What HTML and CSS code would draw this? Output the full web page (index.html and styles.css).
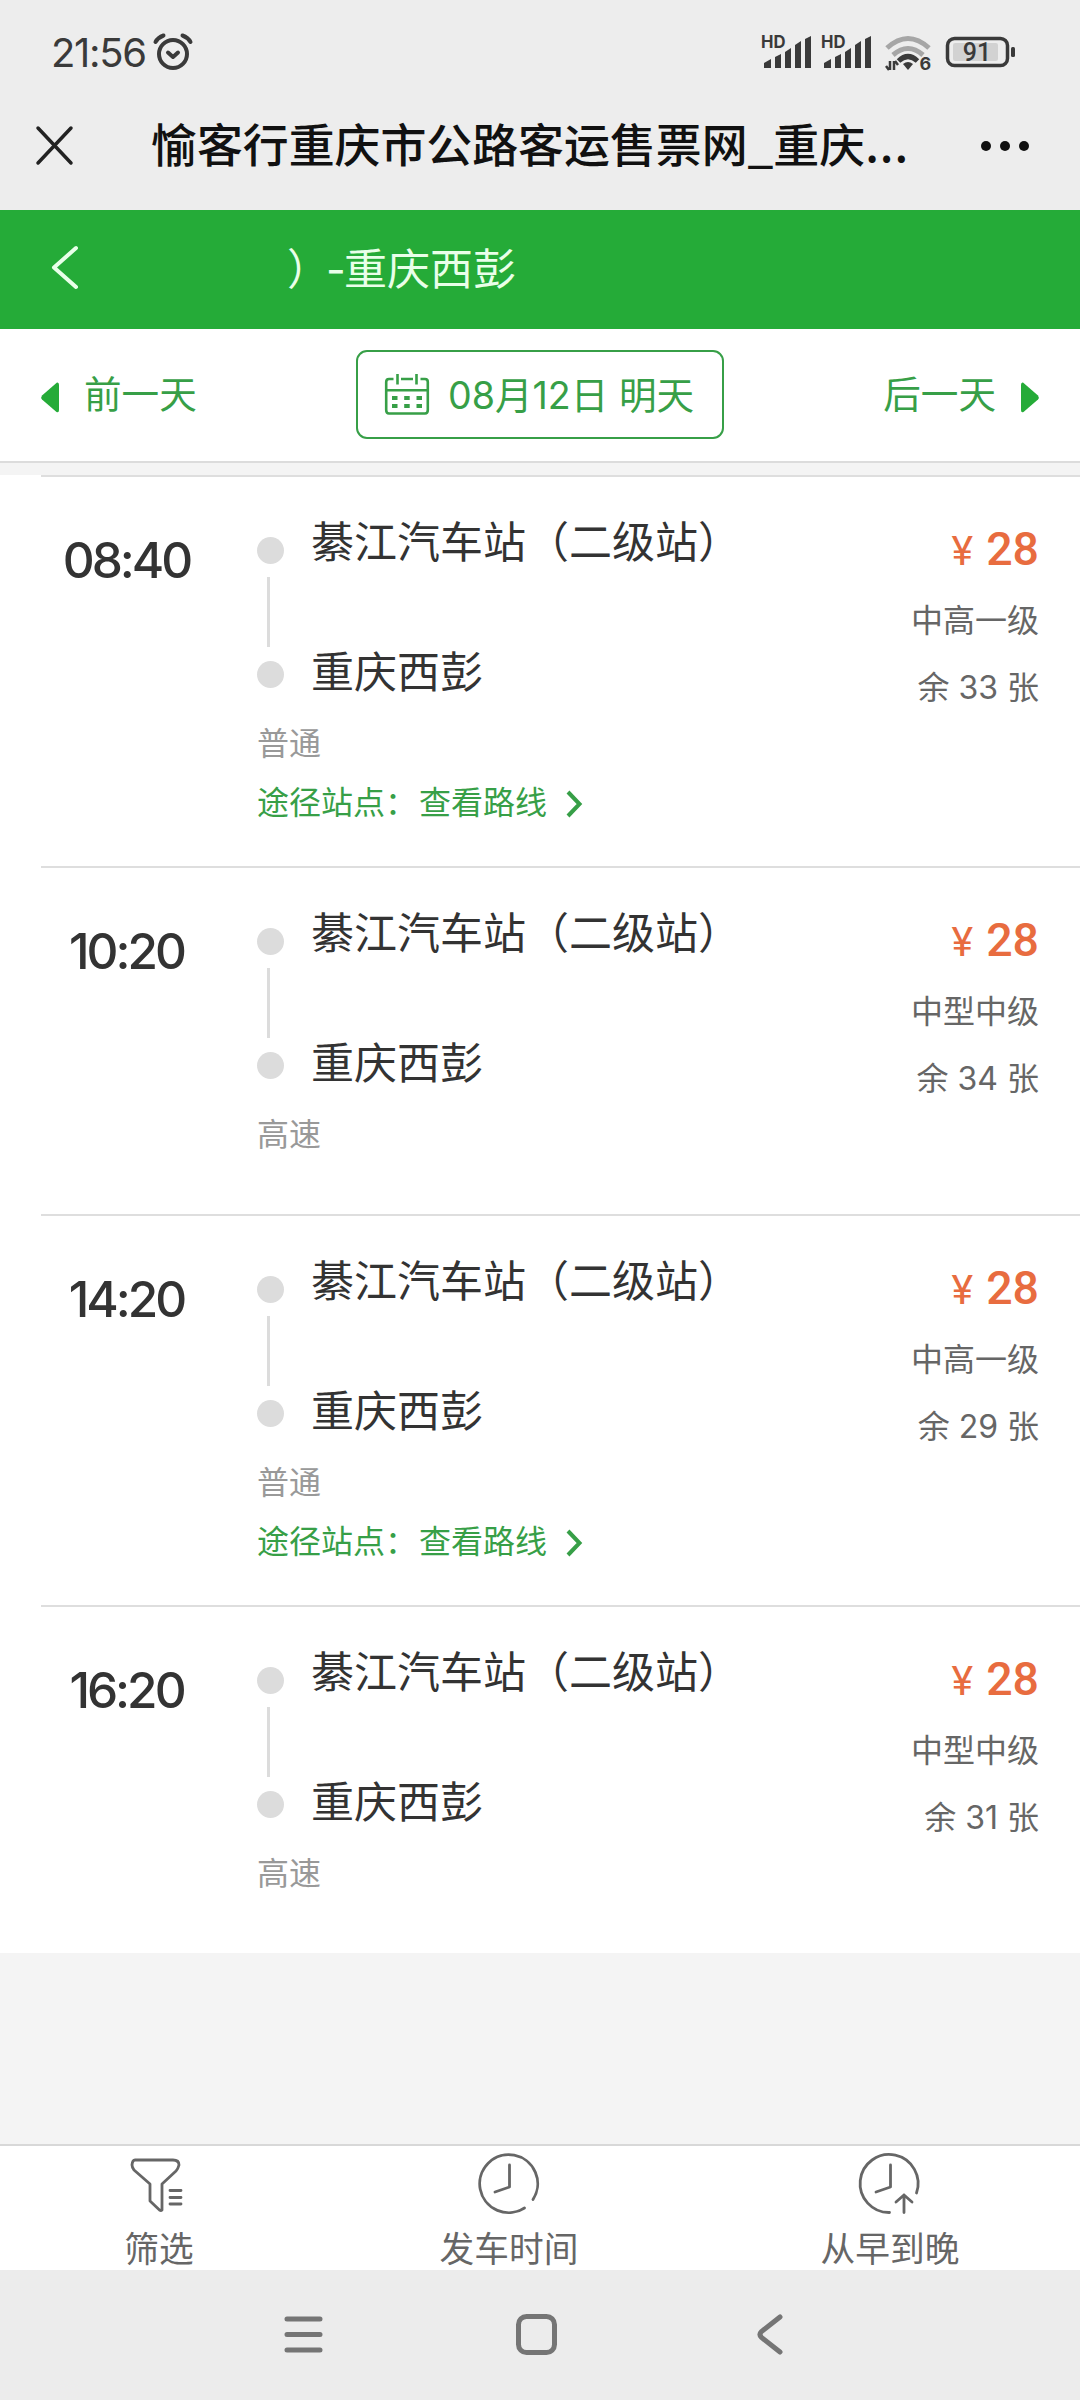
FILE: index.html
```html
<!DOCTYPE html>
<html lang="zh-CN">
<head>
<meta charset="utf-8">
<title>愉客行重庆市公路客运售票网</title>
<link rel="stylesheet" href="styles.css">
</head>
<body>
<div class="status">
  <span class="clock">21:56</span>
  <svg class="alarm" width="40" height="38" viewBox="0 0 40 38" fill="none" stroke="#3a3a3a" stroke-width="4" stroke-linecap="round" stroke-linejoin="round"><circle cx="20" cy="22" r="14"/><path d="M15 20.500l5 4.500 5-4.500"/><path d="M2.500 10Q5 5.500 10.500 3.500M37.500 10Q35 5.500 29.500 3.500"/></svg>
  <div class="status-icons">
    <svg class="signal" width="50" height="34" viewBox="0 0 50 34" fill="#3a3a3a"><text x="-1" y="13" class="hd" textLength="24.500" lengthAdjust="spacingAndGlyphs">HD</text><path d="M2 33v-5l7-4v9zM13 33V22l6-3v14zM23 33V17l6-4v20zM33 33V10l6-4v27zM43 33V4l6-3v32z"/></svg>
    <svg class="signal" width="50" height="34" viewBox="0 0 50 34" fill="#3a3a3a"><text x="-1" y="13" class="hd" textLength="24.500" lengthAdjust="spacingAndGlyphs">HD</text><path d="M2 33v-5l7-4v9zM13 33V22l6-3v14zM23 33V17l6-4v20zM33 33V10l6-4v27zM43 33V4l6-3v32z"/></svg>
    <svg class="wifi" width="48" height="38" viewBox="0 0 48 38" fill="none" stroke-width="5"><g stroke="#a6a6a6"><path d="M2 13Q23-6 44 13"/><path d="M8 20Q23 7 38 20"/></g><path d="M13.500 26Q23 17 32.500 26" stroke="#3a3a3a"/><path d="M18 29q5-4 10 0l-5 6z" fill="#3a3a3a"/><path d="M5 26v9M9 26v9M4 35l-3-4M10 26l3 4" stroke="#3a3a3a" stroke-width="2.500"/><text x="34.500" y="35" class="six">6</text></svg>
    <svg class="battery" width="70" height="32" viewBox="0 0 70 32" fill="none"><rect x="1.500" y="2.500" width="60" height="27" rx="7" stroke="#3a3a3a" stroke-width="3.500"/><rect x="7" y="7" width="45" height="18" rx="2" fill="#d2d2d2"/><rect x="65" y="11" width="4" height="10" rx="1.500" fill="#3a3a3a"/><text x="31" y="24.500" text-anchor="middle" class="pct">91</text></svg>
  </div>
</div>
<div class="titlebar">
  <svg class="close" width="37" height="39" viewBox="0 0 37 39" stroke="#222" stroke-width="3.500" stroke-linecap="round"><path d="M2 2l33 35M35 2L2 37"/></svg>
  <div class="title">愉客行重庆市公路客运售票网_重庆<span class="dots">...</span></div>
  <svg class="more" width="50" height="12" viewBox="0 0 50 12" fill="#111"><circle cx="6" cy="6" r="5"/><circle cx="25" cy="6" r="5"/><circle cx="44" cy="6" r="5"/></svg>
</div>
<header class="route-head">
  <svg width="28" height="45" viewBox="0 0 28 45" fill="none" stroke="#e9ffe9" stroke-width="4" stroke-linecap="round" stroke-linejoin="round"><path d="M25 3L3 22.500 25 42"/></svg>
  <h1>）<span class="dash">-</span>重庆西彭</h1>
</header>
<nav class="datebar">
  <a class="prev"><svg width="18" height="31" viewBox="0 0 18 31" fill="#25ab38"><path d="M16 0.500Q18 0 18 3V28Q18 31 15.500 30L1 17.500Q-.5 15.500 1 13.500z"/></svg>前一天</a>
  <a class="date"><svg width="44" height="41" viewBox="0 0 44 41" fill="none" stroke="#379f47" stroke-width="2.600"><path d="M8.500 5H4Q1.200 5 1.200 8V36Q1.200 39.500 4 39.500H40Q42.800 39.500 42.800 36V8Q42.800 5 40 5H35.500M16 5H28M1.200 16.200H42.800M12.500 0V10.500M31.500 0V10.500"/><path d="M7 24h5.500M19.200 24h5.500M31.500 24H37M7 32h5.500M19.200 32h5.500M31.500 32H37" stroke-width="4"/></svg><span>08月12日 明天</span></a>
  <a class="next">后一天<svg width="18" height="31" viewBox="0 0 18 31" fill="#25ab38"><path d="M2 0.500Q0 0 0 3V28Q0 31 2.500 30L17 17.500Q18.500 15.500 17 13.500z"/></svg></a>
</nav>
<main class="list">
  <article class="trip tall">
    <time>08:40</time>
    <div class="track"><i></i><b></b><i></i></div>
    <div class="stops"><p>綦江汽车站（二级站）</p><p>重庆西彭</p><small>普通</small><a>途径站点：<span>查看路线</span><svg width="17" height="28" viewBox="0 0 17 28" fill="none" stroke="#379f47" stroke-width="4"><path d="M2 2l11.500 12L2 26"/></svg></a></div>
    <div class="fare"><strong><em>¥</em>28</strong><span>中高一级</span><span>余 33 张</span></div>
  </article>
  <article class="trip">
    <time>10:20</time>
    <div class="track"><i></i><b></b><i></i></div>
    <div class="stops"><p>綦江汽车站（二级站）</p><p>重庆西彭</p><small>高速</small></div>
    <div class="fare"><strong><em>¥</em>28</strong><span>中型中级</span><span>余 34 张</span></div>
  </article>
  <article class="trip tall">
    <time>14:20</time>
    <div class="track"><i></i><b></b><i></i></div>
    <div class="stops"><p>綦江汽车站（二级站）</p><p>重庆西彭</p><small>普通</small><a>途径站点：<span>查看路线</span><svg width="17" height="28" viewBox="0 0 17 28" fill="none" stroke="#379f47" stroke-width="4"><path d="M2 2l11.500 12L2 26"/></svg></a></div>
    <div class="fare"><strong><em>¥</em>28</strong><span>中高一级</span><span>余 29 张</span></div>
  </article>
  <article class="trip">
    <time>16:20</time>
    <div class="track"><i></i><b></b><i></i></div>
    <div class="stops"><p>綦江汽车站（二级站）</p><p>重庆西彭</p><small>高速</small></div>
    <div class="fare"><strong><em>¥</em>28</strong><span>中型中级</span><span>余 31 张</span></div>
  </article>
</main>
<footer class="tools">
  <a><svg class="funnel" width="62" height="62" viewBox="0 0 62 62" fill="none" stroke="#666" stroke-width="2.800" stroke-linejoin="round" stroke-linecap="round"><path d="M9 7H47Q53 7 53 12Q52 16 50 18L36 31V57Q35 58 33.500 57L24 48V31L8 17Q6 14 6 12Q6.500 7 9 7z"/><path d="M44 37.500H55M44 44.500H55M44 51H55"/></svg>筛选</a>
  <a><svg class="dial" width="62" height="62" viewBox="0 0 62 62" fill="none" stroke="#666" stroke-width="2.800" stroke-linecap="round" stroke-linejoin="round"><path d="M47.500 55A29 29 0 1 1 56 46.500"/><path d="M32.500 12V34L18 39"/></svg>发车时间</a>
  <a><svg class="dial" width="62" height="62" viewBox="0 0 62 62" fill="none" stroke="#666" stroke-width="2.800" stroke-linecap="round" stroke-linejoin="round"><path d="M31.500 59.500A29 29 0 1 1 58.500 40"/><path d="M32.500 12V34L18 39M46 59.500V42M38 49l8-7 8 7"/></svg>从早到晚</a>
</footer>
<div class="sysnav">
  <svg width="39" height="37" viewBox="0 0 39 37" stroke="#757575" stroke-width="5" stroke-linecap="round"><path d="M3 3H36M3 18.500H36M3 34H36"/></svg>
  <svg class="home" width="41" height="41" viewBox="0 0 41 41" fill="none" stroke="#757575" stroke-width="5"><rect x="2.500" y="2.500" width="36" height="36" rx="8"/></svg>
  <svg width="26" height="41" viewBox="0 0 26 41" fill="none" stroke="#757575" stroke-width="5" stroke-linecap="round"><path d="M23 3L4.500 17.500Q1.500 20.500 4.500 23.500L23 38"/></svg>
</div>
</body>
</html>
```
FILE: styles.css
```css
* { box-sizing: border-box; margin: 0; padding: 0; }
body {
  width: 1080px; height: 2400px; display: flex; flex-direction: column;
  background: #f4f4f4; color: #333;
  font-family: Inter, "Noto Sans CJK SC", sans-serif;
  white-space: nowrap; overflow: hidden;
}
svg { display: block; flex: none; overflow: visible; }

.status { height: 80px; background: #ededed; display: flex; align-items: flex-start; padding-left: 51px; }
.clock { width: 102px; margin-top: 33px; font-size: 40px; line-height: 40px; letter-spacing: -1.3px; color: #3a3a3a; }
.alarm { margin-top: 32px; }
.status-icons { margin: 35px 64px 0 auto; display: flex; align-items: flex-start; }
.signal { margin-right: 10px; }
.wifi { margin: 0 13px 0 3px; }
.battery { margin-top: 1px; }
.hd { font-size: 17px; font-weight: 700; }
.six { font-size: 18px; font-weight: 700; fill: #3a3a3a; stroke: none; }
.pct { font: 500 25px Roboto, sans-serif; fill: #3a3a3a; }

.titlebar { height: 130px; background: #ededed; display: flex; align-items: center; padding: 0 50px 0 36px; }
.title { margin-left: 78px; font: 500 45.9px/60px "Noto Sans CJK SC", sans-serif; color: #111; margin-top: -6px; }
.titlebar .close, .titlebar .more { margin-top: 1px; }
.dots { letter-spacing: 1px; }
.more { margin-left: auto; }

.route-head { height: 119px; background: #25ab38; display: flex; align-items: center; padding-left: 51px; color: #e9ffe9; }
.route-head svg { margin-bottom: 5px; }
.route-head h1 { margin: -2px 0 0 208px; font-size: 43px; font-weight: 400; line-height: 60px; }
.dash { display: inline-block; width: 18px; margin-left: -4px; }

.datebar { height: 134px; background: #fff; border-bottom: 2px solid #dcdcdc; display: flex; align-items: center; justify-content: space-between; padding: 0 41px; color: #379f47; font-size: 37.6px; line-height: 60px; }
.datebar a { display: flex; align-items: center; }
.prev, .next { width: 160px; }
.prev svg { margin-right: 25px; margin-top: 4px; }
.next { justify-content: flex-end; }
.next svg { margin-left: 25px; margin-top: 4px; }
.datebar .date { width: 368px; height: 89px; margin-bottom: 2px; border: 2px solid #379f47; border-radius: 11px; padding-left: 27px; }
.date span { margin: 3px 0 0 19px; }

.list { margin-top: 12px; background: #fff; }
.trip { height: 348px; margin-left: 41px; border-top: 2px solid #dedede; display: flex; }
.trip.tall { height: 391px; }
.trip time { width: 174px; padding: 53px 3px 0 0; text-align: center; font-size: 49.5px; font-weight: 500; line-height: 60px; letter-spacing: -3px; }
.track { width: 54px; margin-left: 42px; padding-top: 60px; }
.track i { display: block; width: 27px; height: 27px; border-radius: 50%; background: #dcdcdc; }
.track b { display: block; width: 3px; height: 70px; margin: 13px 0 14px 10px; background: #dcdcdc; }
.stops { padding-top: 35px; display: flex; flex-direction: column; }
.stops p { font-size: 43px; line-height: 60px; }
.stops p + p { margin-top: 70px; }
.stops small { margin: 22px 0 0 -54px; font-size: 32px; line-height: 40px; color: #999; }
.stops a { margin: 19px 0 0 -54px; display: flex; align-items: center; font-size: 32px; line-height: 40px; color: #379f47; }
.stops a span { margin-left: 2px; }
.stops a svg { margin-left: 19px; margin-top: 2px; }
.fare { margin-left: auto; padding: 42px 41px 0 0; display: flex; flex-direction: column; align-items: flex-end; }
.fare strong { font-family: Roboto, sans-serif; font-size: 46.5px; font-weight: 500; line-height: 60px; color: #e86c3f; }
.fare em { font-style: normal; font-weight: 400; font-size: 41px; margin-right: 13px; }
.fare span { font-size: 32px; line-height: 40px; color: #666; margin-top: 20px; }
.fare span + span { margin-top: 27px; }

.tools { margin-top: auto; height: 126px; background: #fff; border-top: 2px solid #d8d8d8; display: grid; grid-template-columns: 318px 382px 380px; color: #666; font-size: 34.7px; }
.tools a { display: flex; flex-direction: column; align-items: center; padding-top: 7px; line-height: 50px; }
.tools svg { margin-bottom: 9px; }
.tools .funnel { margin-left: -5px; }
.tools .dial { margin-left: -2px; }
.sysnav { height: 130px; background: #ececec; display: flex; align-items: center; justify-content: space-between; padding: 0 297px 2px 284px; }
.sysnav .home { margin-right: 8px; }
```
